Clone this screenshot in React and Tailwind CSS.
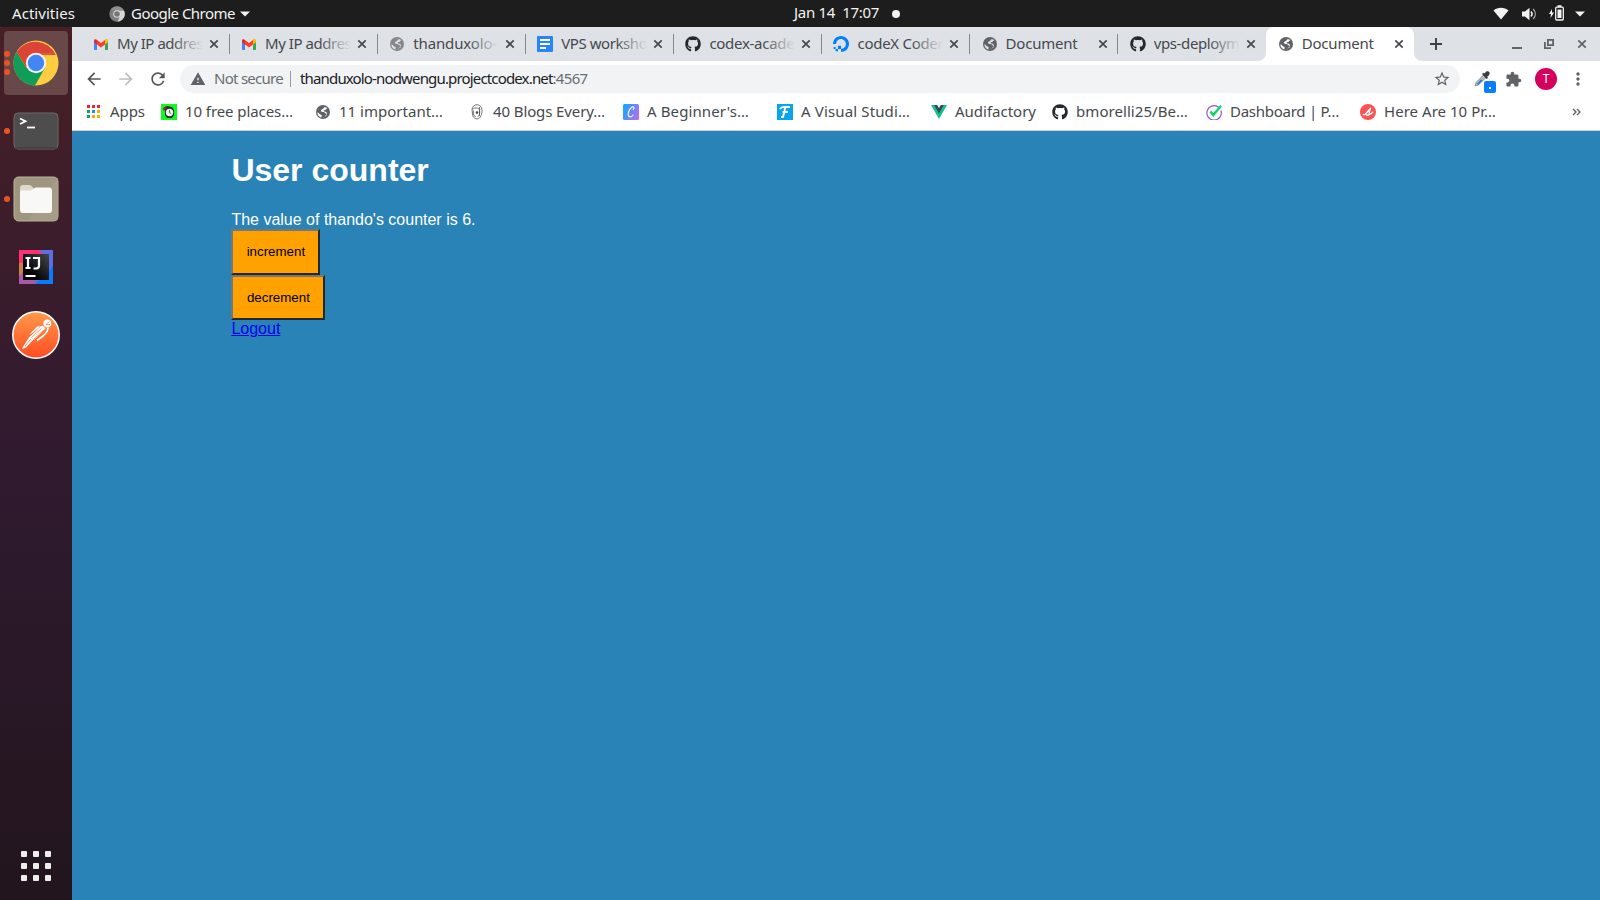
import { useLayoutEffect, useRef, useState } from "react";
import { MdArrowBack, MdArrowForward, MdRefresh, MdWarning, MdStarBorder, MdExtension, MdMoreVert } from "react-icons/md";
import { FaGithub } from "react-icons/fa";
import { SiDigitalocean } from "react-icons/si";

/* Text tracked so that it fills the given width. */
function Label({ text, width, className = "" }) {
  const ref = useRef(null);
  const [spacing, setSpacing] = useState(0);
  useLayoutEffect(() => {
    const natural = ref.current.getBoundingClientRect().width;
    setSpacing((width - natural) / text.length);
  }, [text, width]);
  return (
    <span ref={ref} className={`shrink-0 whitespace-pre ${className}`} style={{ letterSpacing: `${spacing}px` }}>
      {text}
    </span>
  );
}

function Gmail() {
  return (
    <svg viewBox="0 0 14 11" className="-ml-px h-[11px] w-[14px]">
      <path d="M0 2v8.200c0 .5.4.8.8.8H3V4.500z" fill="#4285f4" />
      <path d="M14 2v8.200c0 .5-.4.8-.8.8H11V4.500z" fill="#34a853" />
      <path d="M11 1v4.500l3-2.300V1.600C14 .2 12.300-.4 11 .6z" fill="#fbbc04" />
      <path d="M3 5.500V.9l4 3 4-3v4.600L7 8.500z" fill="#ff3b30" />
      <path d="M0 1.600v1.600l3 2.300V.9C1.800-.3 0 .2 0 1.600z" fill="#d93025" />
    </svg>
  );
}

function Globe({ className = "text-[#5f6368]", land = "#fff" }) {
  return (
    <svg viewBox="0 0 14 14" className={`size-[14px] shrink-0 ${className}`}>
      <circle cx="7" cy="7" r="7" fill="currentColor" />
      <path d="M11.300 3C9.800 1.900 8 1.800 7.600 3.300 7.300 4.400 4.900 4.300 4.900 5.800c0 1.300 1.800 1 3 1.300 1 .3.8 1.400 2.200 1.400 1 0 .7 1.300-.2 1.800-1.300.7-1.200 2-2.600 2.300-.8.1-1.600 0-2-.2.1-1.200.8-1.400.3-2.200-.6-1-2.200-.7-2.500-1.800C2.900 7.600 2 7.500 1.400 7.200c0 3.200 2.400 5.500 5.600 5.500l3.400-2.300c.9-.9 1-2.300.2-3C9.600 6.500 7.500 6.700 7.500 5.800s1.700-.7 2.300-1.400c.4-.5 1-.6 1.500-1.400z" fill={land} />
    </svg>
  );
}

function Doc() {
  return (
    <svg viewBox="0 0 16 16" className="size-4">
      <rect width="16" height="16" rx="1" fill="#2684fc" />
      <path d="M3 4h10M3 8h10M3 12h6" stroke="#fff" strokeWidth="1.900" />
    </svg>
  );
}

function Github() {
  return <FaGithub className="size-4 text-[#24292e]" />;
}

function Ocean() {
  return <SiDigitalocean className="size-4 text-[#0080ff]" />;
}

function Close({ className = "text-[#45494d]" }) {
  return (
    <svg viewBox="0 0 10 10" className={`size-[10px] shrink-0 ${className}`}>
      <path d="M1.300 1.300l7.400 7.400M8.700 1.300L1.300 8.700" stroke="currentColor" strokeWidth="1.700" />
    </svg>
  );
}

const tabs = [
  { icon: <Gmail />, text: "My IP addres", width: 86 },
  { icon: <Gmail />, text: "My IP addres", width: 86 },
  { icon: <Globe className="text-[#85878a]" land="#dee1e6" />, text: "thanduxolo-", width: 84 },
  { icon: <Doc />, text: "VPS worksho", width: 86 },
  { icon: <Github />, text: "codex-acade", width: 85 },
  { icon: <Ocean />, text: "codeX Coder", width: 86 },
  { icon: <Globe land="#dee1e6" />, text: "Document", width: 72, plain: true },
  { icon: <Github />, text: "vps-deploym", width: 86 },
  { icon: <Globe />, text: "Document", width: 72, plain: true, active: true },
];

function Tab({ icon, text, width, plain, active, last }) {
  return (
    <div className={`relative flex h-[34px] w-[148.100px] shrink-0 items-center pl-[11.500px] ${active ? "rounded-t-lg bg-white" : ""}`}>
      <span className="flex w-4 justify-center">{icon}</span>
      <div className="relative -mt-0.5 ml-2 flex h-6 w-[86px] items-center overflow-hidden">
        <Label text={text} width={width} className="text-[15px] text-[#45494d]" />
        {!plain && <span className="absolute right-0 top-0 h-full w-8 bg-linear-to-r from-[#dee1e6]/0 to-[#dee1e6]" />}
      </div>
      <span className="ml-1.5 flex">
        <Close />
      </span>
      {!active && !last && <span className="absolute right-0 top-[7px] h-5 w-px bg-[#85888d]" />}
      {active && (
        <>
          <svg viewBox="0 0 8 8" className="absolute -left-2 bottom-0 size-2"><path d="M8 0v8H0a8 8 0 0 0 8-8z" fill="#fff" /></svg>
          <svg viewBox="0 0 8 8" className="absolute -right-2 bottom-0 size-2"><path d="M0 0v8h8a8 8 0 0 1-8-8z" fill="#fff" /></svg>
        </>
      )}
    </div>
  );
}

function Clock() {
  return (
    <svg viewBox="0 0 16 16" className="size-4">
      <path d="M0 0h16v16H0z" fill="#0cfb22" />
      <path d="M4 5l2-3 5 1 2 3v5l-2 3H6l-2-3z" fill="#222b2b" />
      <circle cx="8.500" cy="8.500" r="3.700" fill="#eee" />
      <path d="M8.500 6v2.700l1.600.8" stroke="#444" strokeWidth=".8" fill="none" />
      <path d="M2 4l4-2.500L5 5 2.500 7z" fill="#8b2f25" />
    </svg>
  );
}

function Head() {
  return (
    <svg viewBox="0 0 16 16" className="size-4" fill="none" stroke="#555" strokeWidth=".8">
      <path d="M3 5c.5-2.500 2.500-4.300 5-4.300s4.800 2 5 5.300c.2 4-1.300 8.500-5 9-2.800-.3-4.500-2.500-4.500-5z" />
      <path d="M3 5.500c1-1 2-1.500 4-1.500s3.500.7 3.700 2.500c.3 2.500-.2 5-2.200 6.500M4.500 6.500L4.700 11l2 2M10.500 3v9" />
      <circle cx="8" cy="8.500" r="1" fill="#333" />
    </svg>
  );
}

function Canva() {
  return (
    <svg viewBox="0 0 16 16" className="size-4">
      <defs>
        <linearGradient id="canva" x1="0" y1="0.300" x2="1" y2="0.700">
          <stop offset="0" stopColor="#16a8f8" />
          <stop offset="1" stopColor="#b56bf8" />
        </linearGradient>
      </defs>
      <rect width="16" height="16" rx="1.500" fill="url(#canva)" />
      <path d="M10.300 5.300c1.500-1.300.5-3-1-2.400C7 4 5.200 7.500 5.200 10c0 3.800 3.300 3.500 4.900 1" fill="none" stroke="#fff" strokeWidth="1.100" strokeLinecap="round" />
    </svg>
  );
}

function Froont() {
  return (
    <svg viewBox="0 0 16 16" className="size-4">
      <path d="M0 0h16v16H0z" fill="#08a5ee" />
      <path d="M3 5c1-2 2-2 4-2h6M8.500 3L6 13H4M5.500 8H11" fill="none" stroke="#fff" strokeWidth="1.900" />
    </svg>
  );
}

function Vue() {
  return (
    <svg viewBox="0 0 16 14" className="h-[14px] w-4">
      <path d="M0 0h16L8 14z" fill="#12c088" />
      <path d="M3.200 0h9.600L8 8.400z" fill="#35495e" />
      <path d="M6.200 0h3.600L8 3z" fill="#fff" />
    </svg>
  );
}

function Check() {
  return (
    <svg viewBox="0 0 16 16" className="size-4" fill="none">
      <path d="M13 3.600A7.200 7.200 0 1 0 14.900 6.500" stroke="#9158d5" strokeWidth="1.200" />
      <path d="M4.300 7.500l3 3.600L15 1.800" stroke="#05d86c" strokeWidth="2.300" />
    </svg>
  );
}

function Skill() {
  return (
    <svg viewBox="0 0 16 16" className="size-4">
      <circle cx="8" cy="8" r="8" fill="#fb5252" />
      <path d="M3.300 10.500c1 .8 2.500-.3 3.700-2s2.300-3.500 3.800-4.500C9.500 6 9 8 9.300 9.500s-1.800 2.300-3 1.300M9.300 10c1.300.3 2.600-.8 3.400-1.800" fill="none" stroke="#fff" strokeWidth="1.400" strokeLinecap="round" />
    </svg>
  );
}

const bookmarks = [
  { icon: <Clock />, text: "10 free places…", width: 108 },
  { icon: <Globe />, text: "11 important…", width: 104 },
  { icon: <Head />, text: "40 Blogs Every…", width: 112 },
  { icon: <Canva />, text: "A Beginner's…", width: 102 },
  { icon: <Froont />, text: "A Visual Studi…", width: 109 },
  { icon: <Vue />, text: "Audifactory", width: 81, short: true },
  { icon: <Github />, text: "bmorelli25/Be…", width: 112 },
  { icon: <Check />, text: "Dashboard | P…", width: 109 },
  { icon: <Skill />, text: "Here Are 10 Pr…", width: 112 },
];

function AppsGrid() {
  return (
    <svg viewBox="0 0 13 13" className="size-[13px]">
      <path d="M0 0h3v3H0zM5 0h3v3H5zM10 0h3v3h-3z" fill="#f5222d" />
      <path d="M0 5h3v3H0zM0 10h3v3H0z" fill="#12a05c" />
      <path d="M5 5h3v3H5z" fill="#1a8cff" />
      <path d="M10 5h3v3h-3zM5 10h3v3H5zM10 10h3v3h-3z" fill="#ffa800" />
    </svg>
  );
}

function TopBar() {
  return (
    <header className="flex h-[27px] shrink-0 items-center bg-[#1d1d1d] text-[15px] text-[#f2f2f2]">
      <div className="flex w-[794px] items-center pl-3">
        <Label text="Activities" width={63} />
        <svg viewBox="0 0 16 16" className="ml-[34px] size-4">
          <circle cx="8" cy="8" r="7.700" fill="#7d7d7d" />
          <path d="M8 4.500h7a7.700 7.700 0 0 1-6.500 11.200L11 10z" fill="#d4d4d4" />
          <path d="M1.500 4A7.700 7.700 0 0 1 14.800 4.500H8z" fill="#8f8f8f" />
          <circle cx="8" cy="8" r="3.800" fill="#ddd" />
          <circle cx="8" cy="8" r="2.800" fill="#777" />
        </svg>
        <Label text="Google Chrome" width={104} className="ml-1.5" />
        <svg viewBox="0 0 10 6" className="ml-[5px] h-[6px] w-[10px]"><path d="M0 .5h10L5 5.500z" fill="#f2f2f2" /></svg>
      </div>
      <div className="flex items-center">
        <Label text="Jan 14  17:07" width={85} className="-mt-0.5" />
        <span className="ml-[13px] size-2 rounded-full bg-[#f2f2f2]" />
      </div>
      <div className="ml-auto flex items-center pr-[15px]">
        <svg viewBox="0 0 16 13" className="h-[13px] w-4"><path d="M.5 3.500C4.500-.3 11.500-.3 15.500 3.500L8 12.500z" fill="#f2f2f2" /></svg>
        <svg viewBox="0 0 16 14" className="ml-[13px] h-[14px] w-4">
          <path d="M0 4.500h3L7.500.8v12.400L3 9.500H0z" fill="#f2f2f2" />
          <path d="M9 4.500c1.300 1.500 1.300 3.500 0 5" stroke="#f2f2f2" strokeWidth="1.500" fill="none" />
          <path d="M11.200 2c2.800 3 2.800 7 0 10" stroke="#a6a6a6" strokeWidth="1.300" fill="none" />
        </svg>
        <svg viewBox="0 0 15 16" className="-mt-px ml-[11px] h-4 w-[15px]">
          <path d="M3 4L0 9h2l-.5 4L5 7.500H3z" fill="#f2f2f2" />
          <rect x="6.700" y="2.200" width="7.600" height="12.800" rx="1" stroke="#f2f2f2" strokeWidth="1.300" fill="none" />
          <path d="M8.500 4.500h4v8.500h-4zM8.500.3h4V2h-4z" fill="#f2f2f2" />
        </svg>
        <svg viewBox="0 0 10 6" className="ml-[11px] h-[6px] w-[10px]"><path d="M0 .5h10L5 5.500z" fill="#f2f2f2" /></svg>
      </div>
    </header>
  );
}

function DockItem({ dots = 0, active, children }) {
  return (
    <div className={`relative flex size-16 items-center justify-center rounded ${active ? "bg-[#694849]" : ""}`}>
      <div className="absolute left-0 top-0 flex h-full w-[6px] flex-col items-center justify-center gap-[3px]">
        {Array.from({ length: dots }, (_, i) => (
          <span key={i} className="size-[6px] rounded-full bg-[#e95420]" />
        ))}
      </div>
      {children}
    </div>
  );
}

function Dock() {
  return (
    <nav className="flex w-[72px] shrink-0 flex-col items-center gap-1 bg-linear-to-b from-[#471f25] via-[#301a30] to-[#22151d] pt-1">
      <DockItem dots={3} active>
        <svg viewBox="0 0 46 46" className="size-[46px]">
          <circle cx="23" cy="23" r="22.500" fill="#ffcd40" />
          <path d="M3.500 11.800A22.500 22.500 0 0 0 22 45.500L32 28 13.500 28z" fill="#0f9d58" />
          <path d="M3.500 11.800A22.500 22.500 0 0 1 42.800 15H23L13.500 28z" fill="#db4437" />
          <path d="M23 13h19.800l-12.500 4z" fill="#cda52f" opacity=".3" />
          <circle cx="23" cy="23" r="10.200" fill="#f1f1f1" />
          <circle cx="23" cy="23" r="8.200" fill="#4285f4" />
        </svg>
      </DockItem>
      <DockItem dots={1}>
        <svg viewBox="0 0 46 38" className="h-[38px] w-[46px]">
          <rect x="1" y="1" width="44" height="36" rx="4" fill="#4d4d4d" stroke="#6e6a69" />
          <path d="M2 36h42" stroke="#353535" />
          <path d="M7 6.500l5.500 2.700L7 12" fill="none" stroke="#fff" strokeWidth="1.800" />
          <path d="M14 15.500h8" stroke="#fff" strokeWidth="1.800" />
        </svg>
      </DockItem>
      <DockItem dots={1}>
        <svg viewBox="0 0 46 46" className="size-[46px]">
          <rect x="1" y="1" width="44" height="44" rx="4.500" fill="#9f967f" stroke="#bbb39e" />
          <path d="M45 1v42q0 2-4 2H15z" fill="#aaa28c" opacity=".6" />
          <path d="M7 12q0-3 3-3h6q2 0 3 1.500l2 2.500v6H7z" fill="#dedacb" />
          <path d="M7 16.500q0-2 2-2h8q1.500 0 3-1.500t3-1.500h13q3 0 3 3V34q0 3-3 3H10q-3 0-3-3z" fill="#f8f8f6" />
        </svg>
      </DockItem>
      <DockItem>
        <svg viewBox="0 0 34 34" className="size-[34px]">
          <defs>
            <linearGradient id="ijscreen" x1="0" y1="1" x2="1" y2="0">
              <stop offset="0.300" stopColor="#050506" />
              <stop offset="1" stopColor="#45464a" />
            </linearGradient>
          </defs>
          <path d="M0 0h34v34H0z" fill="#5b6fe0" />
          <path d="M0 0h20l8 8-17 9-11-2z" fill="#fe3172" />
          <path d="M0 13h6l2 21H0z" fill="#c98044" />
          <path d="M0 26l6-5 12 13H0z" fill="#a85aa8" />
          <path d="M34 15v19H16l12-9z" fill="#087cfa" />
          <path d="M4 4h26v26H4z" fill="url(#ijscreen)" />
          <path d="M6.500 8h5M9 8v10M6.500 18h5M14 8h6v7.500q0 3-3 3h-2.500" fill="none" stroke="#fff" strokeWidth="2.200" />
          <path d="M6.500 26h10" stroke="#fff" strokeWidth="2" />
        </svg>
      </DockItem>
      <DockItem>
        <svg viewBox="0 0 48 48" className="size-12">
          <defs>
            <linearGradient id="postman" x1="0" y1="0" x2="0" y2="1">
              <stop offset="0" stopColor="#ff9a4b" />
              <stop offset="1" stopColor="#ff4b22" />
            </linearGradient>
          </defs>
          <circle cx="24" cy="24" r="23.200" fill="url(#postman)" stroke="#fff" strokeWidth="1.500" />
          <circle cx="35.300" cy="12.500" r="3.900" fill="#fff" />
          <path d="M33.500 17.500L22 29l-4-3.500L29 15q2.500-1 4.500 2.500z" fill="#fff" />
          <path d="M18 25l3.500 3.500-7.500 8-3.500 1.500v-1.500z" fill="#fff" />
          <path d="M36 16.500c0 3-2 6-5 8.500l-6 4.500" fill="none" stroke="#fff" strokeWidth="1.600" />
          <path d="M18.500 23.500L28 15.500l-2.500-.3-7 7z" fill="#fff" />
          <path d="M19.500 26.500l10-9M22 28l10-9M13 35l6-7M37.500 10.500l-3.500 3h4" stroke="#ff8342" strokeWidth=".8" fill="none" />
        </svg>
      </DockItem>
      <div className="mb-[19px] mt-auto grid grid-cols-3 gap-[6px]">
        {Array.from({ length: 9 }, (_, i) => (
          <span key={i} className="size-[6px] rounded-[1px] bg-[#eeeeec]" />
        ))}
      </div>
    </nav>
  );
}

function Toolbar() {
  return (
    <div className="flex h-9 items-center bg-white text-[#5f6368]">
      <MdArrowBack className="ml-3 size-5 text-[#54585c]" />
      <MdArrowForward className="ml-3 size-5 text-[#bdbfc1]" />
      <MdRefresh className="ml-3 size-5 text-[#54585c]" />
      <div className="ml-3 flex h-7 w-[1280px] items-center rounded-full bg-[#f1f3f4] text-[15px]">
        <MdWarning className="ml-[10px] size-4" />
        <Label text="Not secure" width={69} className="-mt-0.5 ml-2 text-[#6a6e72]" />
        <span className="ml-[7px] h-4 w-px bg-[#9a9da0]" />
        <Label text="thanduxolo-nodwengu.projectcodex.net" width={252.5} className="-mt-0.5 ml-[9px] text-[#202124]" />
        <Label text=":4567" width={35} className="-mt-0.5 text-[#6a6e72]" />
        <MdStarBorder className="ml-auto mr-[9px] size-[18px]" />
      </div>
      <span className="relative -mt-px ml-[13px] flex">
        <svg viewBox="0 0 18 18" className="size-[18px]">
          <path d="M2 16l1-3.500L10.500 5 13 7.500 5.500 15z" fill="#b8c0c6" stroke="#777" strokeWidth=".7" />
          <path d="M4 13.500L8 9.500l2 .5L5 15z" fill="#297be6" />
          <path d="M9 4l1.500-1.300 1.300.8C12.500 1.500 14 1 15 1.300c1.500.4 2 1.800 1.500 3-.4 1-1.500 2-2.300 2.200l.8 1.500-1.500 1z" fill="#3d3d3f" />
        </svg>
        <span className="absolute left-[11px] top-[11px] flex size-3 items-center justify-center rounded-[2px] bg-[#0a7cff]">
          <span className="mt-[2px] size-[2px] bg-white" />
        </span>
      </span>
      <MdExtension className="ml-[14px] size-[17px]" />
      <span className="ml-[13px] flex size-[22px] items-center justify-center rounded-full bg-[#d5005b] font-['Roboto',sans-serif] text-xs text-white">T</span>
      <MdMoreVert className="ml-[11px] size-5" />
    </div>
  );
}

function Browser() {
  return (
    <div className="flex min-w-0 flex-1 flex-col">
      <div className="flex h-[34px] items-center bg-[#dee1e6] pl-[9.500px] text-[#45494d]">
        {tabs.map((tab, i) => (
          <Tab key={i} {...tab} last={i === 7} />
        ))}
        <svg viewBox="0 0 12 12" className="ml-4 size-3"><path d="M6 0v12M0 6h12" stroke="#3c4043" strokeWidth="1.900" /></svg>
        <div className="ml-auto flex items-center pr-[13px] text-[#5f6368]">
          <svg viewBox="0 0 10 10" className="size-[10px]"><path d="M0 9h10" stroke="currentColor" strokeWidth="2" /></svg>
          <svg viewBox="0 0 10 10" className="ml-[22px] size-[10px]" fill="none" stroke="currentColor" strokeWidth="1.800">
            <path d="M3.900.9h5.200v5.200H3.900zM.9 3v6.100H7" />
          </svg>
          <span className="ml-[23px] flex"><Close className="text-[#5f6368]" /></span>
        </div>
      </div>
      <Toolbar />
      <div className="flex h-[34px] items-center border-b border-[#cfd2d5] bg-white pb-1 pl-[15px] text-[15px] text-[#45494d]">
        <AppsGrid />
        <Label text="Apps" width={35} className="-mt-px ml-[10px] mr-4" />
        {bookmarks.map(({ icon, text, width, short }) => (
          <div key={text} className={`flex shrink-0 items-center gap-2 ${short ? "w-[121px]" : "w-[154px]"}`}>
            <span className="flex w-4 shrink-0 justify-center">{icon}</span>
            <Label text={text} width={width} className="-mt-px" />
          </div>
        ))}
        <svg viewBox="0 0 9 8" className="ml-auto mr-[19px] h-2 w-[9px]"><path d="M1 1l3 3-3 3M5 1l3 3-3 3" stroke="#5f6368" strokeWidth="1.400" fill="none" /></svg>
      </div>
      <main className="flex-1 bg-[#2983b6] pl-[159.400px] pt-[21px] font-['Liberation_Sans',sans-serif] text-base leading-[18px] text-white">
        <h1 className="mb-[22px] text-[32px] font-bold leading-[37px]">User counter</h1>
        <p>The value of thando's counter is 6.</p>
        <div className="flex flex-col items-start">
          <button className="h-[46px] w-[89px] border-2 border-b-[#262626] border-l-[#767676] border-r-[#262626] border-t-[#767676] bg-[#ffa200] text-[13.333px] text-black">increment</button>
          <button className="h-[45px] w-[94px] border-2 border-b-[#262626] border-l-[#767676] border-r-[#262626] border-t-[#767676] bg-[#ffa200] text-[13.333px] text-black">decrement</button>
        </div>
        <a href="#logout" className="text-[#0000ee] underline">Logout</a>
      </main>
    </div>
  );
}

export default function App() {
  return (
    <div className="flex h-[900px] w-[1600px] flex-col overflow-hidden font-['Noto_Sans',sans-serif]">
      <TopBar />
      <div className="flex min-h-0 flex-1">
        <Dock />
        <Browser />
      </div>
    </div>
  );
}
